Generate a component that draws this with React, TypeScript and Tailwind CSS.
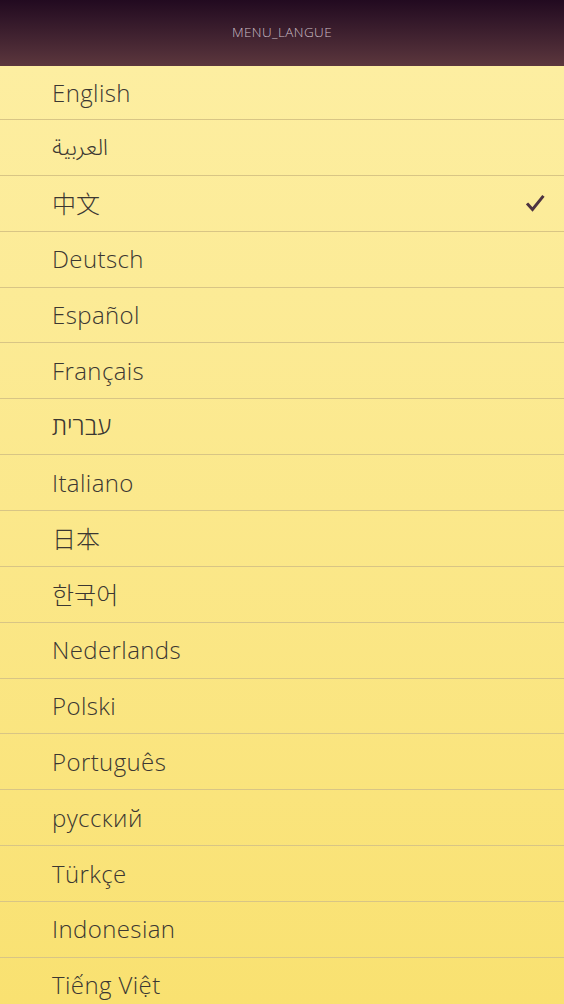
import React from "react";

type Kind = "latin" | "arabic" | "hebrew" | "cjk" | "kr";

const langs: [string, Kind][] = [
  ["English", "latin"],
  ["العربية", "arabic"],
  ["中文", "cjk"],
  ["Deutsch", "latin"],
  ["Español", "latin"],
  ["Français", "latin"],
  ["עברית", "hebrew"],
  ["Italiano", "latin"],
  ["日本", "cjk"],
  ["한국어", "kr"],
  ["Nederlands", "latin"],
  ["Polski", "latin"],
  ["Português", "latin"],
  ["русский", "latin"],
  ["Türkçe", "latin"],
  ["Indonesian", "latin"],
  ["Tiếng Việt", "latin"],
];

function Label({ text, kind }: { text: string; kind: Kind }) {
  if (kind === "arabic")
    return (
      <span className="leading-none text-[23px] font-light" style={{ fontFamily: '"Noto Sans Arabic", sans-serif' }}>
        {text}
      </span>
    );
  if (kind === "hebrew")
    return <span className="leading-none text-[24.5px] font-light">{text}</span>;
  if (kind === "cjk")
    return (
      <span className="leading-none text-[24px] font-light" style={{ fontFamily: '"Noto Sans CJK SC", sans-serif' }}>
        {text}
      </span>
    );
  if (kind === "kr")
    return (
      <span className="leading-none text-[24px] font-light" style={{ fontFamily: '"Noto Sans CJK KR", sans-serif' }}>
        {text}
      </span>
    );
  return <span className="leading-none text-[24px] font-light tracking-[0.4px]">{text}</span>;
}

export default function App() {
  return (
    <div className="w-[564px] h-[1004px] overflow-hidden flex flex-col bg-[#fae273]" style={{ fontFamily: '"Open Sans", "Noto Sans", sans-serif' }}>
      <div className="h-[66px] shrink-0 flex items-center justify-center bg-gradient-to-b from-[#220a20] to-[#5c373d]">
        <span className="text-[13.5px] font-light tracking-[0.4px] text-[#cbbcc5] -mt-[2px]">MENU_LANGUE</span>
      </div>
      <div className="flex-1 flex flex-col bg-gradient-to-b from-[#fdeea1] to-[#f9e170]">
        {langs.map(([l, kind], i) => (
          <div
            key={l}
            className={`${i === 0 ? "h-[54px]" : "h-[55.87px]"} shrink-0 flex items-center justify-between pl-[52px] pr-[19px] border-b border-[#d8c585] text-[#3b3732]`}
          >
            <Label text={l} kind={kind} />
            {i === 2 && (
              <svg width="19" height="19" viewBox="0 0 19 19">
                <path d="M2 10.5 L6.5 15.5 L16.5 3" fill="none" stroke="#4d3341" strokeWidth="3" strokeLinecap="square" />
              </svg>
            )}
          </div>
        ))}
      </div>
    </div>
  );
}
